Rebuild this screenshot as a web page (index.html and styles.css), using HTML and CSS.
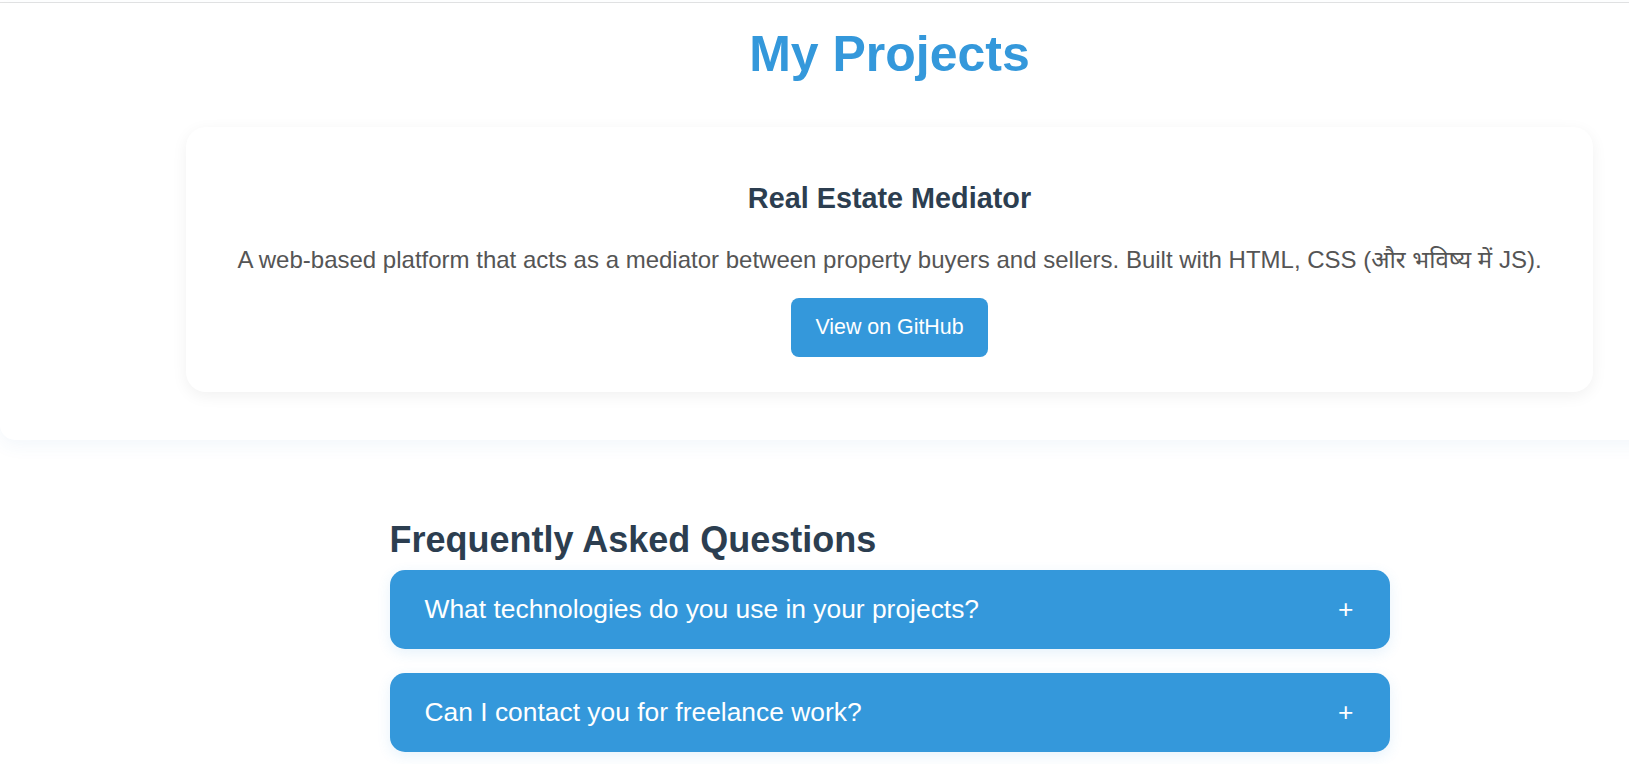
FILE: index.html
```html
<!DOCTYPE html>
<html lang="en">
<head>
<meta charset="utf-8">
<title>My Projects</title>
<link rel="stylesheet" href="styles.css">
</head>
<body>
<div class="topline"></div>
<div class="page">
  <section class="projects">
    <h2 class="section-title">My Projects</h2>
    <div class="project-card">
      <h3 class="project-name">Real Estate Mediator</h3>
      <p class="project-desc">A web-based platform that acts as a mediator between property buyers and sellers. Built with HTML, CSS (और भविष्य में JS).</p>
      <div class="actions">
        <a class="btn" href="#">View on GitHub</a>
      </div>
    </div>
  </section>

  <section class="faq">
    <h2 class="faq-title">Frequently Asked Questions</h2>
    <div class="faq-item">
      <span class="faq-q">What technologies do you use in your projects?</span>
      <span class="faq-icon">+</span>
    </div>
    <div class="faq-item">
      <span class="faq-q">Can I contact you for freelance work?</span>
      <span class="faq-icon">+</span>
    </div>
  </section>
</div>
</body>
</html>
```

FILE: styles.css
```css
html, body {
  margin: 0;
  padding: 0;
  background: #ffffff;
  overflow-x: hidden;
}

body {
  font-family: "Liberation Sans", Arial, "Noto Sans", sans-serif;
  color: #2c3e50;
}

.topline {
  height: 2px;
  border-bottom: 1px solid #e3e3e3;
}

.page {
  width: 1779px;
}

.projects {
  background: #ffffff;
  border-radius: 0 0 15px 15px;
  box-shadow: 0 6px 18px rgba(52, 120, 180, 0.06);
  padding: 22px 186px 48px;
}

.section-title {
  margin: 0 0 44px;
  font-size: 50px;
  font-weight: 700;
  line-height: normal;
  color: #3498db;
  text-align: center;
}

.project-card {
  background: #ffffff;
  border-radius: 20px;
  box-shadow: 0 4px 16px rgba(0, 0, 0, 0.06);
  padding: 55px 40px 35px;
  text-align: center;
}

.project-name {
  margin: 0 0 27px;
  font-size: 28.8px;
  font-weight: 700;
  line-height: normal;
  color: #2c3e50;
}

.project-desc {
  margin: 0 0 23px;
  font-size: 24px;
  line-height: normal;
  color: #555555;
}

.actions {
  display: flex;
  justify-content: center;
}

.btn {
  display: block;
  background: #3498db;
  color: #ffffff;
  text-decoration: none;
  font-size: 21.4px;
  line-height: normal;
  padding: 17px 24px;
  border-radius: 8px;
}

.faq {
  max-width: 1000px;
  margin: 79px auto 0;
}

.faq-title {
  margin: 0 0 9px;
  font-size: 36px;
  font-weight: 700;
  line-height: normal;
  color: #2c3e50;
}

.faq-item {
  display: flex;
  justify-content: space-between;
  align-items: center;
  background: #3498db;
  color: #ffffff;
  border-radius: 15px;
  padding: 24px 36px 24px 35px;
  margin-bottom: 24px;
  font-size: 26.4px;
  line-height: normal;
  box-shadow: 0 4px 14px rgba(52, 152, 219, 0.12);
}
```
